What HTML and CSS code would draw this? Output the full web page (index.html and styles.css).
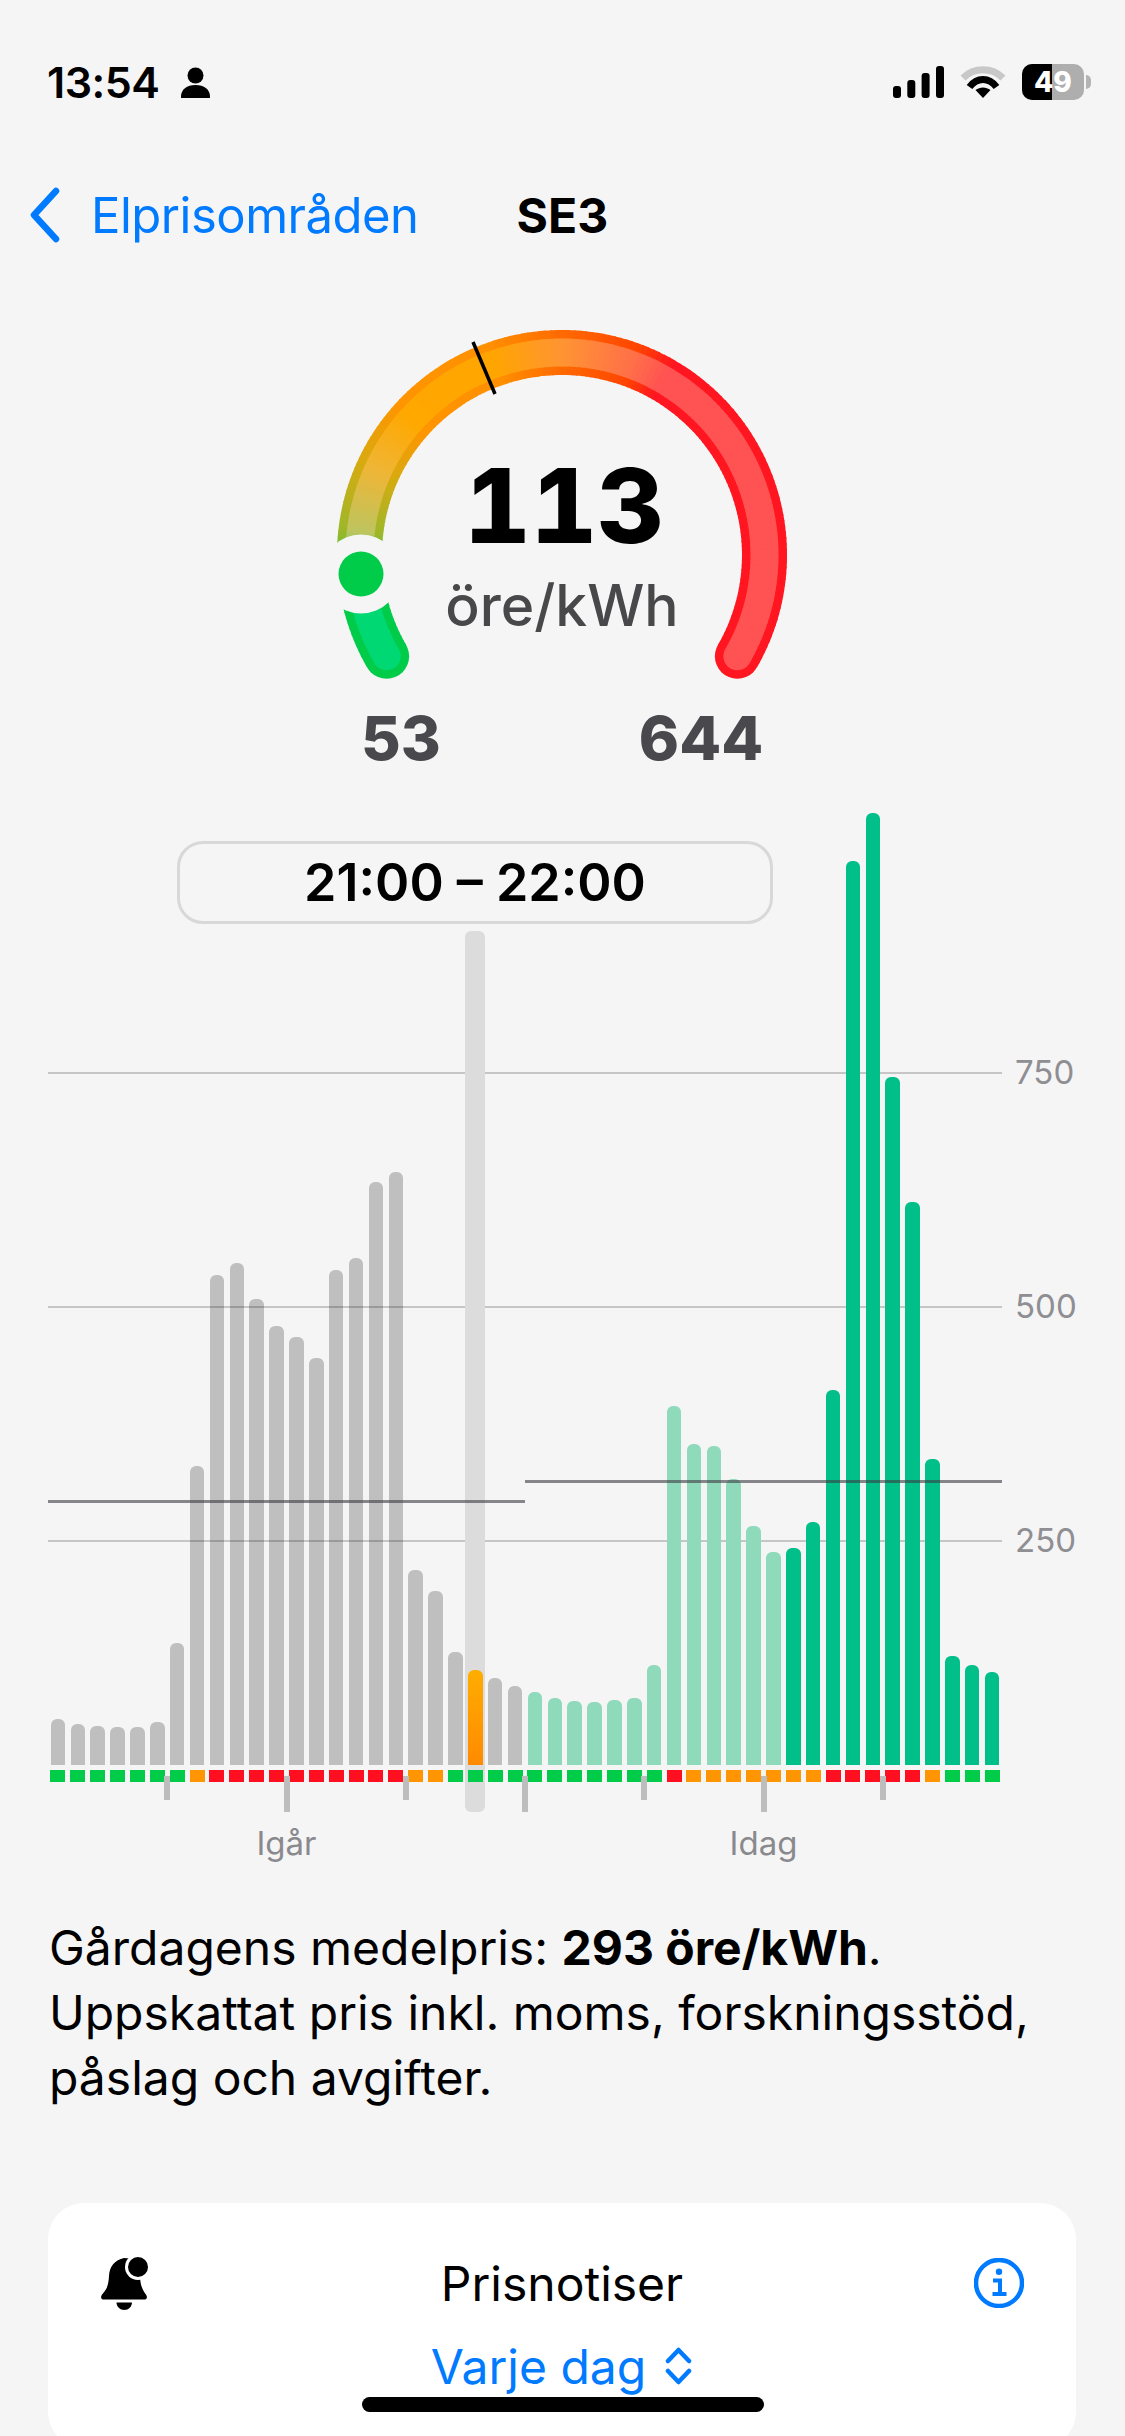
FILE: index.html
```html
<!DOCTYPE html>
<html lang="sv">
<head>
  <meta charset="UTF-8" />
  <meta name="viewport" content="width=device-width, initial-scale=1" />
  <title>SE3 – Elpriser</title>
  <link rel="stylesheet" href="styles.css">
</head>
<body>
  <div class="phone">
    <div class="status">
      <div class="status-left">
        <span class="time">13:54</span>
        <svg class="person" viewBox="0 0 29 31"><circle cx="14.5" cy="8.5" r="8"/><path d="M0 31c-.5-8 5-13 14.500-13S29.500 23 29 31z"/></svg>
      </div>
      <div class="status-right">
        <svg class="signal" viewBox="0 0 51 32"><rect x="0" y="20" width="8" height="12" rx="3"/><rect x="14.300" y="14" width="8" height="18" rx="3"/><rect x="28.600" y="7" width="8" height="25" rx="3"/><rect x="43" y="0" width="8" height="32" rx="3"/></svg>
        <svg class="wifi" viewBox="0 0 46 32">
          <path class="wifi-off" d="M3 12C14 1 32 1 43 12" />
          <path class="wifi-on" d="M9.500 21C17 11 29 11 36.500 21" />
          <path class="wifi-dot" d="M23 32L15.500 24C20 20.500 26 20.500 30.500 24Z" />
        </svg>
        <div class="battery"><span class="battery-fill"></span><span class="battery-text">49</span><span class="battery-nub"></span></div>
      </div>
    </div>

    <div class="nav">
      <svg class="back" viewBox="0 0 32 56"><path d="M27 4L5 28l22 24"/></svg>
      <span class="back-label">Elprisområden</span>
      <span class="nav-title">SE3</span>
    </div>

    <div class="gauge">
      <svg class="gauge-arc" viewBox="0 0 450 350">
        <g id="arcSegments"></g>
        <circle class="gauge-halo" cx="24" cy="244" r="39.500"/>
        <circle class="gauge-dot" cx="24" cy="244" r="22.500"/>
        <line class="gauge-tick" x1="136" y1="12" x2="158" y2="64"/>
      </svg>
      <div class="reading">
        <div class="reading-value">113</div>
        <div class="reading-unit">öre/kWh</div>
      </div>
    </div>
    <div class="range">
      <span class="range-low">53</span>
      <span class="range-high">644</span>
    </div>

    <div class="chart">
      <div class="grid-line grid-750"><span>750</span></div>
      <div class="grid-line grid-500"><span>500</span></div>
      <div class="grid-line grid-250"><span>250</span></div>
      <div class="selected-col"></div>
      <div class="bars" id="bars"></div>
      <div class="avg-line avg-left"></div>
      <div class="avg-line avg-right"></div>
      <div class="time-pill">21:00 – 22:00</div>
      <div class="strip" id="strip"></div>
      <div id="ticks"></div>
      <div class="days">
        <span>Igår</span>
        <span>Idag</span>
      </div>
    </div>

    <p class="note">Gårdagens medelpris: <strong>293 öre/kWh</strong>.<br>Uppskattat pris inkl. moms, forskningsstöd,<br>påslag och avgifter.</p>

    <div class="card">
      <div class="card-row">
        <svg class="bell" viewBox="0 0 48 53">
          <path d="M24 1C15 3 9.500 9 9 19C8.500 28 7 32 2.500 37C0 40 1 42.500 4 42.500L44 42.500C47 42.500 48 40 45.500 37C42 32 40.500 28 40 20L36 2Z"/>
          <path d="M16.500 45.500h15.500c0 4-3.500 7.500-7.750 7.500s-7.750-3.500-7.750-7.500z"/>
          <circle class="bell-ring" cx="38" cy="10" r="13"/>
          <circle cx="38" cy="10" r="10"/>
        </svg>
        <span class="card-title">Prisnotiser</span>
        <svg class="info" viewBox="0 0 50 50">
          <circle cx="25" cy="25" r="23"/>
          <path class="info-i" d="M19 22.500h7v13.500M18.500 36h14"/>
          <circle class="info-dot" cx="25" cy="13.800" r="3.200"/>
        </svg>
      </div>
      <div class="picker">
        <span>Varje dag</span>
        <svg class="updown" viewBox="0 0 29 38"><path d="M4 14L14.500 3L25 14M4 24L14.500 35L25 24"/></svg>
      </div>
    </div>

    <div class="home-bar"></div>
  </div>

  <script>
    // Stapelhöjder i px, en per timme (igår + idag)
    const heights = [46,41,39,38,38,43,122,299,490,502,466,439,428,407,495,507,583,593,195,174,113,95,87,79,
                     73,67,64,63,65,67,100,359,321,319,286,239,213,217,243,375,904,952,688,563,306,109,100,93];
    const levels = 'gggggggorrrrrrrrrrooggggggggggg' + 'rooooooorrrrrogg' + 'g';

    const bars = document.getElementById('bars');
    const strip = document.getElementById('strip');
    heights.forEach(function (h, i) {
      const slot = document.createElement('div');
      slot.className = 'bar-slot';
      const bar = document.createElement('div');
      let kind = 'bar-past';
      if (i === 21) kind = 'bar-now';
      else if (i >= 37) kind = 'bar-today';
      else if (i >= 24) kind = 'bar-light';
      bar.className = 'bar ' + kind;
      bar.style.height = h + 'px';
      slot.appendChild(bar);
      bars.appendChild(slot);

      const cellSlot = document.createElement('div');
      cellSlot.className = 'bar-slot';
      const cell = document.createElement('div');
      cell.className = 'cell cell-' + levels[i];
      cellSlot.appendChild(cell);
      strip.appendChild(cellSlot);
    });

    // Tick var sjätte timme, långa vid 12 och 00
    const ticks = document.getElementById('ticks');
    for (let i = 1; i < 8; i++) {
      const tick = document.createElement('div');
      tick.className = i % 2 === 0 ? 'tick tick-long' : 'tick';
      tick.style.left = (i * 6 * 19.875 - 3) + 'px';
      ticks.appendChild(tick);
    }

    // Mätarens båge: små segment eftersom svg saknar vinkelgradient
    const outerStops = [[0,[0,204,74]],[24,[0,204,74]],[36,[156,184,42]],[55,[216,170,16]],[72,[255,149,0]],[100,[255,144,0]],[120,[255,106,0]],[140,[255,69,0]],[150,[255,22,32]],[240,[255,22,32]]];
    const innerStops = [[0,[0,216,115]],[25,[0,216,115]],[36,[188,197,96]],[55,[240,181,53]],[72,[255,168,0]],[100,[255,165,0]],[120,[255,148,51]],[140,[255,112,72]],[150,[255,82,82]],[240,[255,82,82]]];

    function colorAt(stops, t) {
      for (let i = 1; i < stops.length; i++) {
        if (t <= stops[i][0]) {
          const a = stops[i - 1], b = stops[i];
          const f = (t - a[0]) / (b[0] - a[0]);
          const c = a[1].map(function (v, k) { return Math.round(v + (b[1][k] - v) * f); });
          return 'rgb(' + c.join(',') + ')';
        }
      }
      return 'rgb(' + stops[stops.length - 1][1].join(',') + ')';
    }

    function point(t) {
      const a = (150 + t) * Math.PI / 180;
      return [225 + 202.5 * Math.cos(a), 225 + 202.5 * Math.sin(a)];
    }

    let arcHtml = '';
    [[45, outerStops], [28, innerStops]].forEach(function (ring) {
      const width = ring[0], stops = ring[1];
      const s = point(0), e = point(240);
      arcHtml += '<circle cx="' + s[0] + '" cy="' + s[1] + '" r="' + width / 2 + '" fill="' + colorAt(stops, 0) + '"/>';
      arcHtml += '<circle cx="' + e[0] + '" cy="' + e[1] + '" r="' + width / 2 + '" fill="' + colorAt(stops, 240) + '"/>';
      for (let t = 0; t < 240; t += 1.5) {
        const p = point(t), q = point(Math.min(t + 1.9, 240));
        arcHtml += '<path d="M' + p[0] + ' ' + p[1] + 'A202.5 202.5 0 0 1 ' + q[0] + ' ' + q[1] + '" fill="none" stroke-width="' + width + '" stroke="' + colorAt(stops, t + 0.75) + '"/>';
      }
    });
    document.getElementById('arcSegments').innerHTML = arcHtml;
  </script>
</body>
</html>
```

FILE: styles.css
```css
* {
  box-sizing: border-box;
}
body {
  margin: 0;
  background: #f5f5f5;
  font-family: Inter, "Noto Sans", sans-serif;
  color: #000;
}
.phone {
  position: relative;
  width: 1125px;
  height: 2436px;
  overflow: hidden;
  background: #f5f5f5;
}

/* status bar */
.status {
  height: 164px;
  padding: 0 41px 0 47px;
  display: flex;
  align-items: center;
  justify-content: space-between;
}
.status-left {
  display: flex;
  align-items: center;
  gap: 14px;
}
.time {
  font-size: 43px;
  font-weight: 600;
  letter-spacing: -0.5px;
}
.person {
  width: 29px;
  height: 31px;
  margin-left: 8px;
}
.status-right {
  display: flex;
  align-items: center;
}
.signal {
  width: 51px;
  height: 32px;
  margin-right: 16px;
}
.wifi {
  width: 46px;
  height: 32px;
  margin-right: 16px;
}
.wifi-off,
.wifi-on {
  fill: none;
  stroke-width: 7;
}
.wifi-off {
  stroke: #c8c8c8;
}
.wifi-on {
  stroke: #000;
}
.battery {
  position: relative;
  width: 62px;
  height: 36px;
  background: #aeaeae;
  border-radius: 10px;
  display: flex;
  align-items: center;
  justify-content: center;
}
.battery-fill {
  position: absolute;
  left: 0;
  top: 0;
  bottom: 0;
  width: 30px;
  background: #000;
  border-radius: 10px 0 0 10px;
}
.battery-text {
  position: relative;
  color: #fff;
  font-size: 28px;
  font-weight: 800;
}
.battery-nub {
  position: absolute;
  right: -7px;
  top: 11px;
  width: 5px;
  height: 14px;
  background: #b4b4b4;
  border-radius: 0 5px 5px 0;
}

/* nav */
.nav {
  height: 102px;
  padding-left: 29px;
  display: flex;
  align-items: center;
}
.back {
  width: 32px;
  height: 56px;
  fill: none;
  stroke: #007aff;
  stroke-width: 6.5;
  stroke-linecap: round;
  stroke-linejoin: round;
}
.back-label {
  margin-left: 30px;
  font-size: 49px;
  color: #007aff;
  letter-spacing: -0.5px;
}
.nav-title {
  margin-left: 98px;
  font-size: 48px;
  font-weight: 700;
}

/* gauge */
.gauge {
  position: relative;
  width: 450px;
  height: 350px;
  margin: 64px 0 0 337px;
}
.gauge-arc {
  display: block;
  width: 450px;
  height: 350px;
  overflow: visible;
}
.gauge-halo {
  fill: #f5f5f5;
}
.gauge-dot {
  fill: #00cc4a;
}
.gauge-tick {
  stroke: #000;
  stroke-width: 3.5;
}
.reading {
  position: absolute;
  left: 0;
  right: 0;
  top: 126px;
  text-align: center;
}
.reading-value {
  font-size: 103px;
  font-weight: 800;
  line-height: 100px;
  font-feature-settings: "tnum";
  padding-left: 4px;
}
.reading-unit {
  margin-top: 15px;
  font-size: 57px;
  font-weight: 500;
  line-height: 70px;
  color: #48484a;
}
.range {
  height: 76px;
  width: 600px;
  margin: 20px 0 37px 269px;
  display: grid;
  grid-template-columns: 264px 336px;
  font-size: 61px;
  font-weight: 800;
  line-height: 76px;
  color: #48484d;
  text-align: center;
}

/* chart */
.chart {
  position: relative;
  width: 954px;
  margin-left: 48px;
}
.grid-line {
  position: absolute;
  left: 0;
  right: 0;
  height: 2px;
  background: #c6c6c6;
}
.grid-line span {
  position: absolute;
  left: 967px;
  top: -20px;
  font-size: 33px;
  line-height: 40px;
  color: #8e8e93;
}
.grid-750 {
  top: 259px;
}
.grid-500 {
  top: 493px;
}
.grid-250 {
  top: 727px;
}
.selected-col {
  position: absolute;
  left: 417px;
  top: 118px;
  width: 20px;
  height: 881px;
  background: #dcdcdc;
  border-radius: 6px;
}
.bars {
  position: relative;
  height: 952px;
  display: flex;
  align-items: flex-end;
}
.bar-slot {
  flex: 1;
  display: flex;
  justify-content: center;
}
.bar {
  width: 14.5px;
  border-radius: 6px 6px 0 0;
}
.bar-past {
  background: rgba(0, 0, 0, 0.22);
}
.bar-now {
  background: linear-gradient(#ffad00, #ff8a00);
}
.bar-light {
  background: #8fdabb;
}
.bar-today {
  background: #00bf89;
}
.avg-line {
  position: absolute;
  height: 3px;
  background: rgba(60, 60, 67, 0.6);
}
.avg-left {
  left: 0;
  width: 477px;
  top: 687px;
}
.avg-right {
  left: 477px;
  width: 477px;
  top: 667px;
}
.time-pill {
  position: absolute;
  left: 129px;
  top: 28px;
  width: 596px;
  height: 83px;
  border: 3px solid #d8d8d8;
  border-radius: 26px;
  font-size: 52px;
  font-weight: 600;
  line-height: 77px;
  text-align: center;
}
.strip {
  position: relative;
  margin-top: 5px;
  display: flex;
}
.cell {
  width: 15px;
  height: 12px;
}
.cell-g {
  background: #00cc4a;
}
.cell-o {
  background: #ff9500;
}
.cell-r {
  background: #ff0f1f;
}
.tick {
  position: absolute;
  top: 963px;
  width: 6px;
  height: 24px;
  background: #bdbdbd;
}
.tick-long {
  height: 36px;
}
.days {
  margin-top: 41px;
  display: grid;
  grid-template-columns: 1fr 1fr;
  font-size: 33px;
  line-height: 40px;
  color: #8a8a8e;
  text-align: center;
}

/* text */
.note {
  margin: 52px 0 0 49px;
  font-size: 48px;
  line-height: 65px;
}
.note strong {
  font-weight: 700;
}

/* card */
.card {
  width: 1028px;
  height: 245px;
  margin: 93px 0 0 48px;
  padding-top: 50px;
  background: #fff;
  border-radius: 36px;
}
.card-row {
  height: 60px;
  padding: 0 52px;
  display: grid;
  grid-template-columns: 1fr auto 1fr;
  align-items: center;
}
.bell {
  width: 48px;
  height: 53px;
}
.bell-ring {
  fill: #fff;
}
.card-title {
  font-size: 48px;
}
.info {
  justify-self: end;
  width: 50px;
  height: 50px;
  fill: none;
  stroke: #007aff;
  stroke-width: 4.5;
}
.info-i {
  stroke-width: 4;
}
.info-dot {
  fill: #007aff;
  stroke: none;
}
.picker {
  height: 60px;
  margin-top: 23px;
  display: flex;
  align-items: center;
  justify-content: center;
  gap: 18px;
  font-size: 48px;
  color: #007aff;
}
.updown {
  width: 29px;
  height: 38px;
  fill: none;
  stroke: #007aff;
  stroke-width: 4.5;
  stroke-linecap: round;
  stroke-linejoin: round;
}
.home-bar {
  position: absolute;
  left: 362px;
  top: 2397px;
  width: 402px;
  height: 15px;
  background: #000;
  border-radius: 8px;
}
```
